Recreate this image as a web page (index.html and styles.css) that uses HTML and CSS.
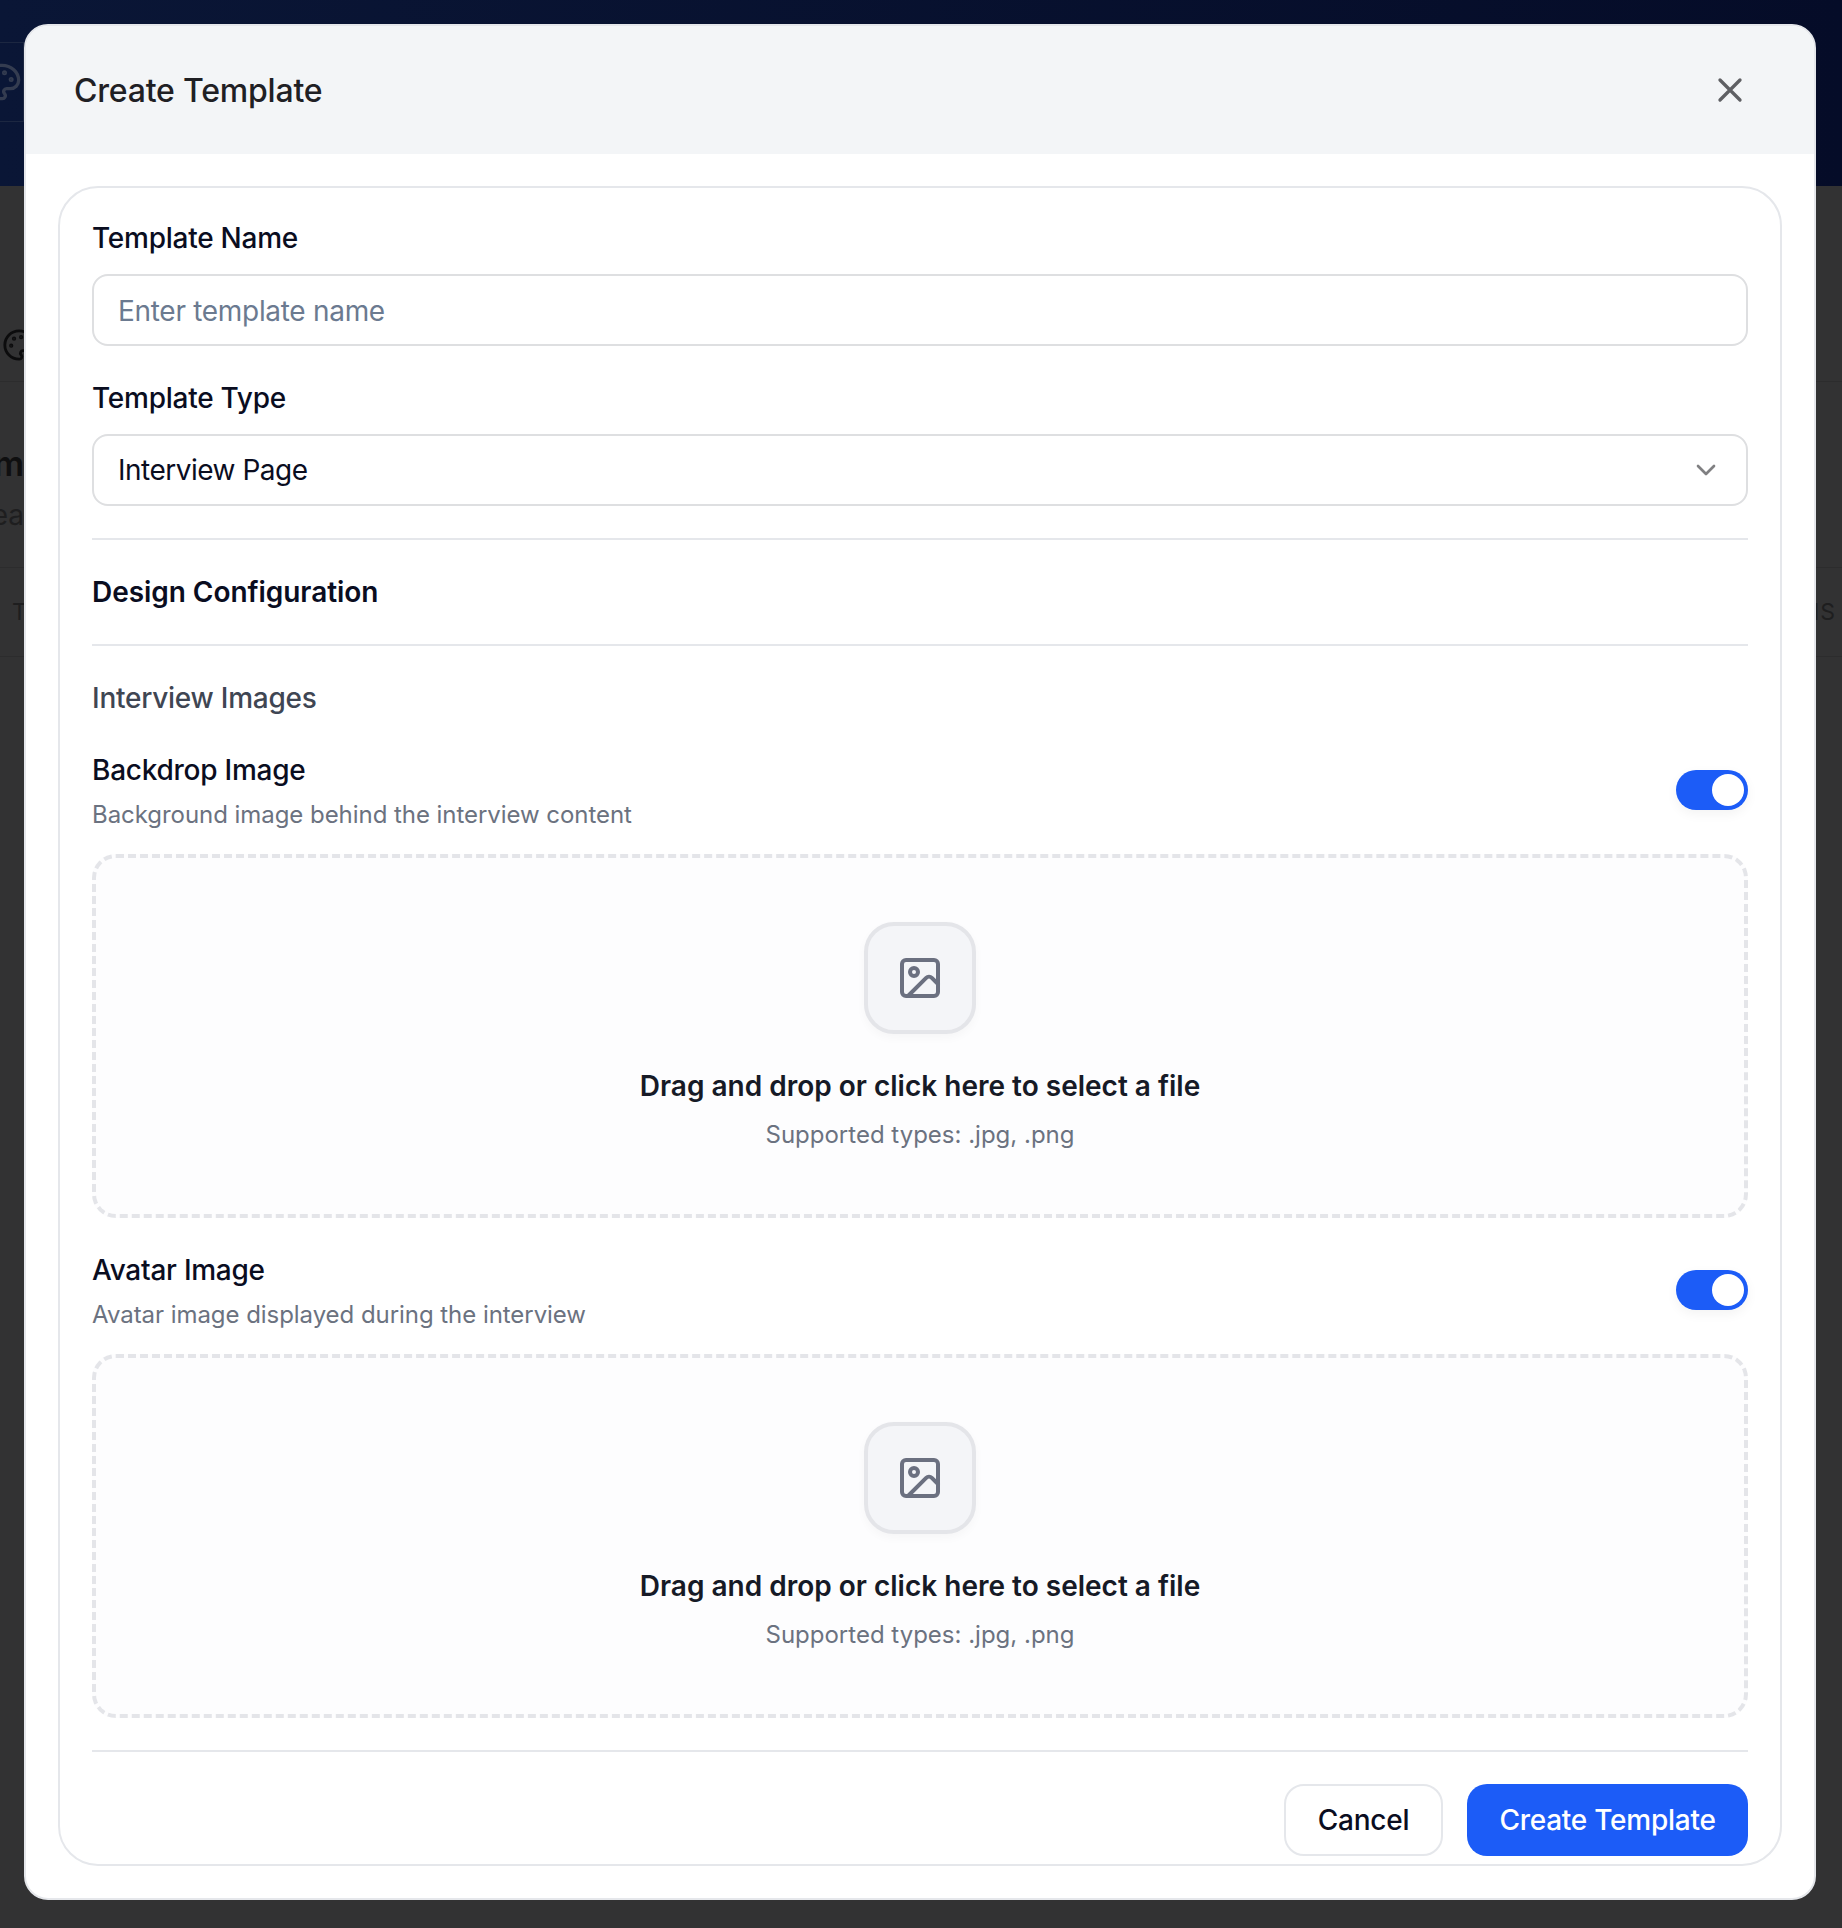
FILE: index.html

```html
<!DOCTYPE html>
<html lang="en">
<head>
    <meta charset="UTF-8">
    <meta name="viewport" content="width=device-width, initial-scale=1.0">
    <title>Create Template</title>
    <link rel="stylesheet" href="styles.css">
</head>
<body>

    <!-- page behind the dialog, only the edges show -->
    <div class="backdrop">
        <div class="top-bar">
            <div class="top-tile">
                <svg class="top-palette" viewBox="0 0 24 24"><use href="#palette"></use></svg>
            </div>
        </div>
        <div class="dim-section">
            <svg class="dim-palette" viewBox="0 0 24 24"><use href="#palette"></use></svg>
        </div>
        <div class="dim-heading">
            <p class="dim-title">m</p>
            <p class="dim-sub">ea</p>
        </div>
        <div class="dim-table-head">
            <span>T</span>
            <span>NS</span>
        </div>
    </div>

    <div class="modal">
        <div class="modal-header">
            <h2 class="modal-title">Create Template</h2>
            <svg class="close-icon" viewBox="0 0 24 24"><path d="M18 6 6 18M6 6l12 12"></path></svg>
        </div>
        <div class="modal-body">
            <form class="card">
                <label class="field-label">Template Name</label>
                <input class="input" type="text" placeholder="Enter template name">

                <label class="field-label next-field">Template Type</label>
                <div class="input select">
                    <span>Interview Page</span>
                    <svg class="chevron" viewBox="0 0 24 24"><path d="m6 9 6 6 6-6"></path></svg>
                </div>

                <hr class="divider">
                <h3 class="section-title">Design Configuration</h3>
                <hr class="divider">
                <h4 class="group-title">Interview Images</h4>

                <div class="image-head">
                    <div>
                        <div class="field-label">Backdrop Image</div>
                        <div class="field-desc">Background image behind the interview content</div>
                    </div>
                    <span class="toggle"><span class="knob"></span></span>
                </div>
                <div class="dropzone">
                    <div class="drop-tile">
                        <svg class="image-icon" viewBox="0 0 24 24"><use href="#image"></use></svg>
                    </div>
                    <div class="drop-text">Drag and drop or click here to select a file</div>
                    <div class="drop-hint">Supported types: .jpg, .png</div>
                </div>

                <div class="image-head next-image">
                    <div>
                        <div class="field-label">Avatar Image</div>
                        <div class="field-desc">Avatar image displayed during the interview</div>
                    </div>
                    <span class="toggle"><span class="knob"></span></span>
                </div>
                <div class="dropzone">
                    <div class="drop-tile">
                        <svg class="image-icon" viewBox="0 0 24 24"><use href="#image"></use></svg>
                    </div>
                    <div class="drop-text">Drag and drop or click here to select a file</div>
                    <div class="drop-hint">Supported types: .jpg, .png</div>
                </div>

                <hr class="divider">
                <div class="actions">
                    <button class="btn btn-cancel" type="button">Cancel</button>
                    <button class="btn btn-primary" type="button">Create Template</button>
                </div>
            </form>
        </div>
    </div>

    <svg class="icon-defs" width="0" height="0">
        <symbol id="image" viewBox="0 0 24 24">
            <rect x="3" y="3" width="18" height="18" rx="2"></rect>
            <circle cx="9" cy="9" r="2"></circle>
            <path d="m21 15-3.086-3.086a2 2 0 0 0-2.828 0L6 21"></path>
        </symbol>
        <symbol id="palette" viewBox="0 0 24 24">
            <path d="M12 22a1 1 0 0 1 0-20 10 9 0 0 1 10 9 5 5 0 0 1-5 5h-2.25a1.75 1.75 0 0 0-1.4 2.8l.3.4a1.75 1.75 0 0 1-1.4 2.8z"></path>
            <circle cx="13.5" cy="6.5" r=".5" fill="currentColor"></circle>
            <circle cx="17.5" cy="10.5" r=".5" fill="currentColor"></circle>
            <circle cx="6.5" cy="12.5" r=".5" fill="currentColor"></circle>
            <circle cx="8.5" cy="7.5" r=".5" fill="currentColor"></circle>
        </symbol>
    </svg>

</body>
</html>
```

FILE: styles.css

```css
* {
    box-sizing: border-box;
}
body {
    margin: 0;
    width: 1842px;
    height: 1928px;
    overflow: hidden;
    position: relative;
    font-family: Inter, "Liberation Sans", sans-serif;
    background-color: #323233;
}
p, h2, h3, h4 {
    margin: 0;
}
.icon-defs {
    position: absolute;
}

/* page behind the dialog */
.backdrop {
    height: 1928px;
    color: #0f0f10;
}
.top-bar {
    height: 186px;
    padding-top: 42px;
    background: linear-gradient(90deg, #0a1636, #050c28);
}
.top-tile {
    width: 24px;
    height: 80px;
    border: 1px solid #1c2741;
    border-left: 0;
    display: flex;
    align-items: center;
}
.top-palette {
    width: 40px;
    height: 40px;
    margin-left: -18px;
    flex-shrink: 0;
    fill: none;
    stroke: #343c50;
    stroke-width: 2;
    color: #343c50;
}
.dim-section {
    height: 196px;
    padding: 142px 0 0 2px;
    border-bottom: 1px solid #2c2c2d;
}
.dim-palette {
    display: block;
    width: 34px;
    height: 34px;
    fill: none;
    stroke: #0c0c0d;
    stroke-width: 2;
    color: #0c0c0d;
}
.dim-heading {
    width: 24px;
    height: 185px;
    padding-top: 60px;
    display: flex;
    flex-direction: column;
    align-items: flex-end;
}
.dim-title {
    font-size: 34px;
    font-weight: 600;
    line-height: 44px;
    white-space: nowrap;
}
.dim-sub {
    margin-top: 11px;
    font-size: 28px;
    line-height: 36px;
    color: #1e1e1f;
}
.dim-table-head {
    height: 90px;
    padding: 0 6px 0 12px;
    display: flex;
    justify-content: space-between;
    align-items: center;
    font-size: 23px;
    letter-spacing: 1px;
    color: #1e1e1f;
    border-top: 1px solid #2c2c2d;
    border-bottom: 1px solid #2c2c2d;
}

/* dialog */
.modal {
    position: absolute;
    top: 24px;
    left: 24px;
    width: 1792px;
    height: 1876px;
    background: white;
    border: 2px solid #e5e7eb;
    border-radius: 24px;
    overflow: hidden;
}
.modal-header {
    height: 128px;
    padding: 0 64px 0 48px;
    background-color: #f3f5f7;
    display: flex;
    justify-content: space-between;
    align-items: center;
}
.modal-title {
    font-size: 32px;
    font-weight: 500;
    letter-spacing: -0.2px;
    color: #1f2024;
}
.close-icon {
    width: 40px;
    height: 40px;
    fill: none;
    stroke: #5f6064;
    stroke-width: 2;
    stroke-linecap: round;
    stroke-linejoin: round;
}
.modal-body {
    padding: 32px;
}
.card {
    height: 1680px;
    padding: 30px 32px 0;
    border: 2px solid #e5e7eb;
    border-radius: 40px;
}
.field-label {
    display: block;
    font-size: 28px;
    font-weight: 500;
    line-height: 40px;
    letter-spacing: -0.25px;
    color: #0a0d1f;
}
.next-field {
    margin-top: 32px;
}
.input {
    display: block;
    width: 100%;
    height: 72px;
    margin-top: 16px;
    padding: 2px 24px 0;
    font-family: Inter, "Liberation Sans", sans-serif;
    font-size: 28px;
    letter-spacing: -0.3px;
    color: #0a0d1f;
    background: white;
    border: 2px solid #dedfe1;
    border-radius: 16px;
}
.input::placeholder {
    color: #6b7a90;
}
.select {
    display: flex;
    justify-content: space-between;
    align-items: center;
    padding: 0 24px;
    letter-spacing: -0.5px;
}
.chevron {
    width: 32px;
    height: 32px;
    fill: none;
    stroke: #808082;
    stroke-width: 2;
    stroke-linecap: round;
    stroke-linejoin: round;
}
.divider {
    height: 2px;
    margin: 32px 0;
    border: 0;
    background-color: #e5e7eb;
}
.section-title {
    font-size: 28px;
    font-weight: 600;
    line-height: 40px;
    letter-spacing: -0.05px;
    color: #0a0d1f;
}
.group-title {
    font-size: 28px;
    font-weight: 500;
    line-height: 40px;
    letter-spacing: -0.25px;
    color: #3f4653;
}
.image-head {
    margin-top: 32px;
    display: flex;
    justify-content: space-between;
    align-items: flex-start;
}
.next-image {
    margin-top: 32px;
}
.field-desc {
    margin-top: 6px;
    font-size: 24px;
    line-height: 38px;
    letter-spacing: -0.05px;
    color: #6b7280;
}
.toggle {
    width: 72px;
    height: 40px;
    margin-top: 20px;
    padding: 4px;
    background-color: #1c5cf7;
    border-radius: 20px;
    display: flex;
    justify-content: flex-end;
    box-shadow: 0 4px 12px rgba(0, 0, 0, 0.05);
}
.knob {
    width: 32px;
    height: 32px;
    background: white;
    border-radius: 50%;
}
.dropzone {
    height: 364px;
    margin-top: 20px;
    padding-top: 64px;
    background-color: #fdfdfe;
    border: 4px dashed #e4e5e9;
    border-radius: 24px;
    display: flex;
    flex-direction: column;
    align-items: center;
}
.drop-tile {
    width: 112px;
    height: 112px;
    background-color: #f4f5f8;
    border: 4px solid #e4e5e9;
    border-radius: 30px;
    display: flex;
    justify-content: center;
    align-items: center;
    box-shadow: 0 4px 10px rgba(0, 0, 0, 0.03);
}
.image-icon {
    width: 48px;
    height: 48px;
    fill: none;
    stroke: #6b7080;
    stroke-width: 2;
    stroke-linecap: round;
    stroke-linejoin: round;
}
.drop-text {
    margin-top: 32px;
    font-size: 28px;
    font-weight: 600;
    line-height: 40px;
    color: #161a26;
}
.drop-hint {
    margin-top: 10px;
    font-size: 24px;
    line-height: 38px;
    color: #6b7280;
}
.actions {
    display: flex;
    justify-content: flex-end;
    gap: 24px;
}
.btn {
    height: 72px;
    font-family: Inter, "Liberation Sans", sans-serif;
    font-size: 28px;
    font-weight: 500;
    letter-spacing: -0.25px;
    border-radius: 20px;
}
.btn-cancel {
    width: 159px;
    color: #0a0d1f;
    background: white;
    border: 2px solid #e5e7eb;
}
.btn-primary {
    width: 281px;
    color: white;
    background-color: #1c5cf7;
    border: 0;
}
```
